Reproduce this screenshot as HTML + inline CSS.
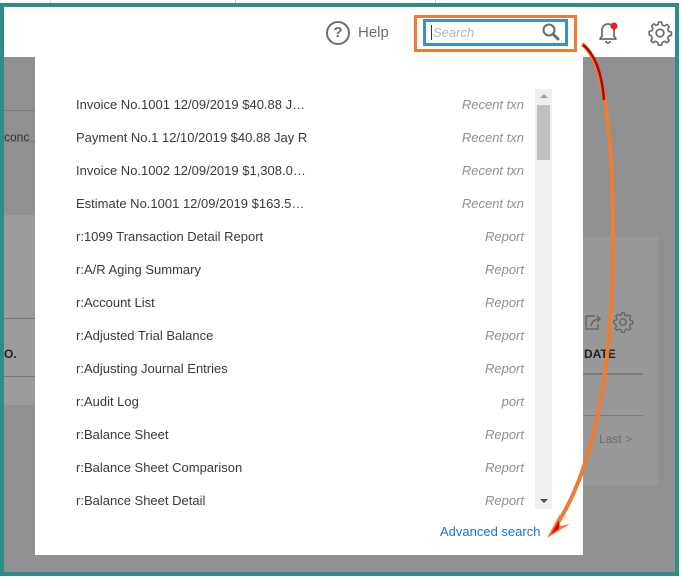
<!DOCTYPE html>
<html><head><style>
*{margin:0;padding:0;box-sizing:border-box}
body{width:681px;height:577px;overflow:hidden;background:#fff;font-family:"Liberation Sans",sans-serif;position:relative}
.a{position:absolute}
.row{position:absolute;left:76px;font-size:13px;color:#393a3d;white-space:nowrap}
.lab{position:absolute;font-size:13px;color:#8d9096;font-style:italic}
</style></head><body>
<div class="a" style="left:0;top:0;width:681px;height:3px;background:#fff"></div>
<div class="a" style="left:50px;top:0;width:1px;height:3px;background:#ccc"></div>
<div class="a" style="left:235px;top:0;width:1px;height:3px;background:#ccc"></div>
<div class="a" style="left:435px;top:0;width:1px;height:3px;background:#ccc"></div>
<div class="a" style="left:0;top:3px;width:679px;height:573px;border:4px solid #2f8c87;background:#8f9091"></div>
<div class="a" style="left:4px;top:7px;width:671px;height:50px;background:#fff"></div>
<div class="a" style="left:4px;top:215px;width:31px;height:190px;background:#9b9b9b"></div>
<div class="a" style="left:4px;top:110px;width:31px;height:1px;background:#7a7a7a"></div>
<div class="a" style="left:4px;top:141px;width:31px;height:1px;background:#7a7a7a"></div>
<div class="a" style="left:4px;top:130px;font-size:12px;color:#333">conc</div>
<div class="a" style="left:4px;top:347px;font-size:12px;color:#222;font-weight:bold">O.</div>
<div class="a" style="left:4px;top:318px;width:31px;height:1px;background:#777"></div>
<div class="a" style="left:4px;top:376px;width:31px;height:1px;background:#777"></div>
<div class="a" style="left:583px;top:237px;width:75px;height:248px;background:#989898"></div>
<div class="a" style="left:584px;top:347px;font-size:12px;color:#222;font-weight:bold">DATE</div>
<div class="a" style="left:583px;top:373px;width:60px;height:2px;background:#7a7a7a"></div>
<div class="a" style="left:583px;top:415px;width:60px;height:1px;background:#7a7a7a"></div>
<div class="a" style="left:599px;top:432px;font-size:12px;color:#6a6a6a">Last &gt;</div>
<svg class="a" style="left:583px;top:312px" width="20" height="20" viewBox="0 0 20 20"><path d="M3 4h9M3 4v13h12v-5" fill="none" stroke="#666" stroke-width="1.5"/><path d="M8 14c1-5 4-7 9-7M14 4l3 3-3 3" fill="none" stroke="#666" stroke-width="1.5"/></svg>
<svg class="a" style="left:612px;top:311px" width="22" height="22" viewBox="0 0 24 24"><circle cx="12" cy="12" r="3.5" fill="none" stroke="#666" stroke-width="1.6"/><path d="M10.5 2h3l.6 2.6 2 .9 2.3-1.4 2.1 2.1-1.4 2.3.9 2 2.6.6v3l-2.6.6-.9 2 1.4 2.3-2.1 2.1-2.3-1.4-2 .9-.6 2.6h-3l-.6-2.6-2-.9-2.3 1.4-2.1-2.1 1.4-2.3-.9-2L2 13.5v-3l2.6-.6.9-2-1.4-2.3 2.1-2.1 2.3 1.4 2-.9z" fill="none" stroke="#666" stroke-width="1.5" stroke-linejoin="round"/></svg>
<div class="a" style="left:326px;top:21px;width:24px;height:24px;border:2px solid #6b6c72;border-radius:50%;text-align:center;font-size:15px;line-height:20px;color:#6b6c72;font-weight:bold">?</div>
<div class="a" style="left:358px;top:24px;font-size:15px;color:#6b6c72">Help</div>
<div class="a" style="left:414px;top:15px;width:163px;height:37px;border:3px solid #ee7d31"></div>
<div class="a" style="left:423px;top:19px;width:145px;height:27px;border:3px solid #3a8fce;background:#fff"></div>
<div class="a" style="left:431px;top:25px;width:1px;height:15px;background:#333"></div>
<div class="a" style="left:433px;top:25px;font-size:13px;color:#b5b5b5;font-style:italic">Search</div>
<svg class="a" style="left:541px;top:22px" width="20" height="20" viewBox="0 0 20 20"><circle cx="8" cy="8" r="5.5" fill="none" stroke="#6b6c72" stroke-width="2"/><path d="M12 12l5 5" stroke="#6b6c72" stroke-width="3" stroke-linecap="round"/></svg>
<svg class="a" style="left:596px;top:20px" width="24" height="26" viewBox="0 0 24 26"><path d="M4 19h16l-2-3v-6a6 6 0 0 0-12 0v6z" fill="none" stroke="#6b6c72" stroke-width="1.8" stroke-linejoin="round"/><path d="M10 21a2 2 0 0 0 4 0" fill="none" stroke="#6b6c72" stroke-width="1.8"/><circle cx="18" cy="6" r="3.5" fill="#e0261a"/></svg>
<svg class="a" style="left:647px;top:20px" width="26" height="26" viewBox="0 0 24 24"><circle cx="12" cy="12" r="3.5" fill="none" stroke="#6b6c72" stroke-width="1.6"/><path d="M10.5 2h3l.6 2.6 2 .9 2.3-1.4 2.1 2.1-1.4 2.3.9 2 2.6.6v3l-2.6.6-.9 2 1.4 2.3-2.1 2.1-2.3-1.4-2 .9-.6 2.6h-3l-.6-2.6-2-.9-2.3 1.4-2.1-2.1 1.4-2.3-.9-2L2 13.5v-3l2.6-.6.9-2-1.4-2.3 2.1-2.1 2.3 1.4 2-.9z" fill="none" stroke="#6b6c72" stroke-width="1.5" stroke-linejoin="round"/></svg>
<div class="a" style="left:35px;top:57px;width:548px;height:498px;background:#fff">
<div class="a" style="left:500px;top:32px;width:17px;height:420px;background:#f0f0f0"></div>
<div class="a" style="left:502px;top:48px;width:13px;height:55px;background:#c0c0c0"></div>
<div class="a" style="left:505px;top:37px;width:0;height:0;border-left:4px solid transparent;border-right:4px solid transparent;border-bottom:4px solid #a0a0a0"></div>
<div class="a" style="left:505px;top:442px;width:0;height:0;border-left:4px solid transparent;border-right:4px solid transparent;border-top:4px solid #555"></div>
<div class="a" style="left:405px;top:467px;font-size:13px;color:#1a73c8">Advanced search</div>
</div>
<div class="row" style="top:97px">Invoice No.1001 12/09/2019 $40.88 J…</div><div class="lab" style="right:157px;top:97px">Recent txn</div>
<div class="row" style="top:130px">Payment No.1 12/10/2019 $40.88 Jay R</div><div class="lab" style="right:157px;top:130px">Recent txn</div>
<div class="row" style="top:163px">Invoice No.1002 12/09/2019 $1,308.0…</div><div class="lab" style="right:157px;top:163px">Recent txn</div>
<div class="row" style="top:196px">Estimate No.1001 12/09/2019 $163.5…</div><div class="lab" style="right:157px;top:196px">Recent txn</div>
<div class="row" style="top:229px">r:1099 Transaction Detail Report</div><div class="lab" style="right:157px;top:229px">Report</div>
<div class="row" style="top:262px">r:A/R Aging Summary</div><div class="lab" style="right:157px;top:262px">Report</div>
<div class="row" style="top:295px">r:Account List</div><div class="lab" style="right:157px;top:295px">Report</div>
<div class="row" style="top:328px">r:Adjusted Trial Balance</div><div class="lab" style="right:157px;top:328px">Report</div>
<div class="row" style="top:361px">r:Adjusting Journal Entries</div><div class="lab" style="right:157px;top:361px">Report</div>
<div class="row" style="top:394px">r:Audit Log</div><div class="lab" style="right:157px;top:394px">port</div>
<div class="row" style="top:427px">r:Balance Sheet</div><div class="lab" style="right:157px;top:427px">Report</div>
<div class="row" style="top:460px">r:Balance Sheet Comparison</div><div class="lab" style="right:157px;top:460px">Report</div>
<div class="row" style="top:493px">r:Balance Sheet Detail</div><div class="lab" style="right:157px;top:493px">Report</div>
<svg class="a" style="left:0;top:0" width="681" height="577">
<path d="M582 44 C606 60 614 150 613 250 C612 380 592 470 556 526" fill="none" stroke="#ee7d31" stroke-width="4"/>
<path d="M583 45 C596 55 602 75 604 100" fill="none" stroke="#c00000" stroke-width="2.5"/>
<path d="M547 538 L560 514 L560 526 L570 524 Z" fill="#ee7d31"/>
<path d="M551 534 L559 520 L559 529 Z" fill="#e00"/>
</svg>
</body></html>
